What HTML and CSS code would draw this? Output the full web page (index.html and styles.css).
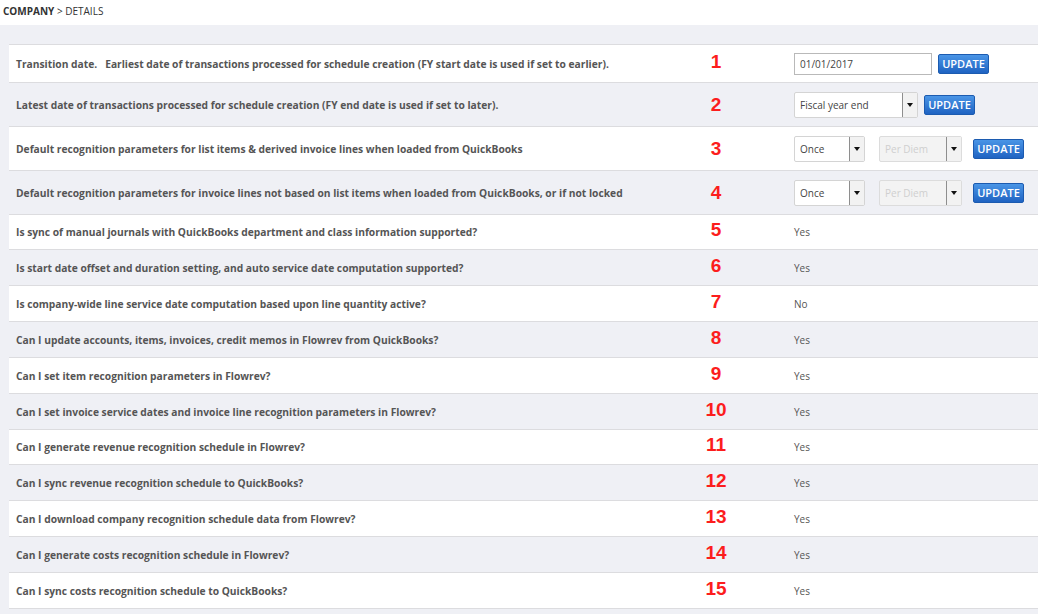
FILE: index.html
```html
<!DOCTYPE html>
<html>
<head>
<meta charset="utf-8">
<link rel="stylesheet" href="styles.css">
</head>
<body>
<div class="crumb"><b>COMPANY</b> &gt; DETAILS</div>
<div class="main">
  <div class="table">
    <div class="row row-input">
      <div class="q">Transition date.&nbsp;&nbsp; Earliest date of transactions processed for schedule creation (FY start date is used if set to earlier).</div>
      <div class="num">1</div>
      <div class="ctl">
        <div class="input">01/01/2017</div>
        <button class="btn btn1">UPDATE</button>
      </div>
    </div>
    <div class="row row-select">
      <div class="q">Latest date of transactions processed for schedule creation (FY end date is used if set to later).</div>
      <div class="num">2</div>
      <div class="ctl">
        <div class="select sel-fy"><span class="lbl">Fiscal year end</span><span class="arr"></span></div>
        <button class="btn btn2">UPDATE</button>
      </div>
    </div>
    <div class="row row-select">
      <div class="q">Default recognition parameters for list items &amp; derived invoice lines when loaded from QuickBooks</div>
      <div class="num">3</div>
      <div class="ctl">
        <div class="select sel-once"><span class="lbl">Once</span><span class="arr"></span></div>
        <div class="select sel-pd disabled"><span class="lbl">Per Diem</span><span class="arr"></span></div>
        <button class="btn btn3">UPDATE</button>
      </div>
    </div>
    <div class="row row-select">
      <div class="q">Default recognition parameters for invoice lines not based on list items when loaded from QuickBooks, or if not locked</div>
      <div class="num">4</div>
      <div class="ctl">
        <div class="select sel-once"><span class="lbl">Once</span><span class="arr"></span></div>
        <div class="select sel-pd disabled"><span class="lbl">Per Diem</span><span class="arr"></span></div>
        <button class="btn btn3">UPDATE</button>
      </div>
    </div>
    <div class="row row-short">
      <div class="q">Is sync of manual journals with QuickBooks department and class information supported?</div>
      <div class="num">5</div>
      <div class="ctl val">Yes</div>
    </div>
    <div class="row">
      <div class="q">Is start date offset and duration setting, and auto service date computation supported?</div>
      <div class="num">6</div>
      <div class="ctl val">Yes</div>
    </div>
    <div class="row">
      <div class="q">Is company-wide line service date computation based upon line quantity active?</div>
      <div class="num">7</div>
      <div class="ctl val">No</div>
    </div>
    <div class="row">
      <div class="q">Can I update accounts, items, invoices, credit memos in Flowrev from QuickBooks?</div>
      <div class="num">8</div>
      <div class="ctl val">Yes</div>
    </div>
    <div class="row">
      <div class="q">Can I set item recognition parameters in Flowrev?</div>
      <div class="num">9</div>
      <div class="ctl val">Yes</div>
    </div>
    <div class="row">
      <div class="q">Can I set invoice service dates and invoice line recognition parameters in Flowrev?</div>
      <div class="num">10</div>
      <div class="ctl val">Yes</div>
    </div>
    <div class="row row-short">
      <div class="q">Can I generate revenue recognition schedule in Flowrev?</div>
      <div class="num">11</div>
      <div class="ctl val">Yes</div>
    </div>
    <div class="row">
      <div class="q">Can I sync revenue recognition schedule to QuickBooks?</div>
      <div class="num">12</div>
      <div class="ctl val">Yes</div>
    </div>
    <div class="row">
      <div class="q">Can I download company recognition schedule data from Flowrev?</div>
      <div class="num">13</div>
      <div class="ctl val">Yes</div>
    </div>
    <div class="row">
      <div class="q">Can I generate costs recognition schedule in Flowrev?</div>
      <div class="num">14</div>
      <div class="ctl val">Yes</div>
    </div>
    <div class="row">
      <div class="q">Can I sync costs recognition schedule to QuickBooks?</div>
      <div class="num">15</div>
      <div class="ctl val">Yes</div>
    </div>
  </div>
</div>
</body>
</html>
```

FILE: styles.css
```css
html, body {
  margin: 0;
  padding: 0;
  background: #ffffff;
  font-family: "Open Sans", "Liberation Sans", sans-serif;
  height: 100%;
  overflow: hidden;
}
.crumb {
  height: 25px;
  box-sizing: border-box;
  padding: 4px 0 0 3px;
  font-size: 10px;
  line-height: 14px;
  color: #333;
}
.crumb b {
  font-weight: 700;
}
.main {
  background: #eff0f5;
  padding: 19px 0 0 9px;
  height: calc(100vh - 25px);
  box-sizing: border-box;
  overflow: hidden;
}
.table {
  border-top: 1px solid #dcdcdf;
}
.row {
  display: grid;
  grid-template-columns: 670px 74px 1fr;
  align-items: center;
  height: 35px;
  border-bottom: 1px solid #dcdcdf;
  background: #ffffff;
}
.row:nth-child(even) {
  background: #eff0f5;
}
.row-input { height: 37px; }
.row-select { height: 43px; }
.row-short { height: 34px; }
.q {
  padding-left: 7px;
  font-size: 10.25px;
  font-weight: 700;
  color: #555;
  white-space: nowrap;
}
.num {
  text-align: center;
  font-family: "Liberation Sans", Arial, sans-serif;
  font-weight: 700;
  font-size: 19px;
  color: #fc1d1d;
  position: relative;
  top: -2px;
}
.row-select .num {
  top: 0;
}
.ctl {
  padding-left: 41px;
  display: flex;
  align-items: center;
}
.val {
  font-size: 10px;
  color: #555;
}
.input {
  width: 138px;
  height: 22px;
  box-sizing: border-box;
  border: 1px solid #b9b9b9;
  background: #fff;
  font-size: 10px;
  color: #444;
  line-height: 20px;
  padding-left: 5px;
}
.select {
  height: 26px;
  box-sizing: border-box;
  border: 1px solid #d4d4d4;
  border-radius: 2px;
  background: #fff;
  display: flex;
  align-items: stretch;
  font-size: 10px;
  color: #444;
}
.select .lbl {
  flex: 1;
  padding-left: 5px;
  line-height: 24px;
  white-space: nowrap;
}
.select .arr {
  width: 14px;
  background: #f2f2f2;
  border-left: 1px solid #8e8e8e;
  position: relative;
}
.select .arr::after {
  content: "";
  position: absolute;
  left: 4px;
  top: 10px;
  border-left: 3px solid transparent;
  border-right: 3px solid transparent;
  border-top: 4px solid #111;
}
.select.disabled {
  background: #f3f3f3;
  color: #cfcfcf;
  border-color: #dcdcdc;
}
.select.disabled .arr {
  background: #f2f2f2;
  border-left-color: #8e8e8e;
}
.sel-fy { width: 124px; }
.sel-once { width: 71px; }
.sel-pd { width: 83px; margin-left: 14px; }
.btn {
  width: 51px;
  height: 20px;
  box-sizing: border-box;
  border: 1px solid #1c5bb0;
  border-radius: 2px;
  background: linear-gradient(#4a95e6, #1f63c2);
  color: #fff;
  font-family: "Open Sans", "Liberation Sans", sans-serif;
  font-size: 11px;
  font-weight: 600;
  padding: 0;
  line-height: 18px;
  text-align: center;
}
.btn1 { margin-left: 6px; }
.btn2 { margin-left: 6px; }
.btn3 { margin-left: 11px; }
```
